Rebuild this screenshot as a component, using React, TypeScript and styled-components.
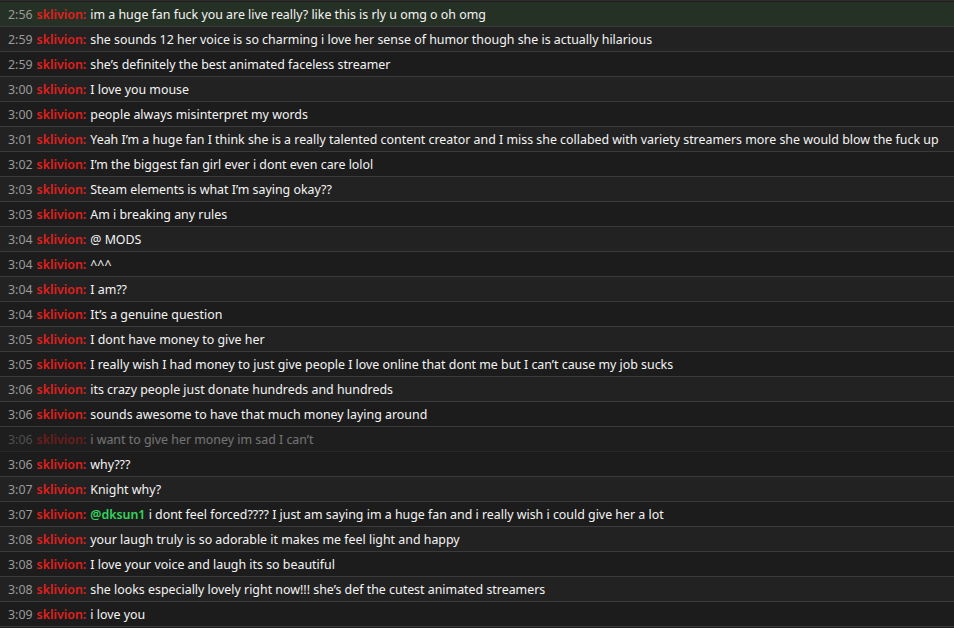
import React from "react";
import styled, { createGlobalStyle } from "styled-components";

const GlobalStyle = createGlobalStyle`
  html, body {
    margin: 0;
    padding: 0;
    background: #1c1c1c;
  }
  body {
    font-family: "Noto Sans", "Open Sans", sans-serif;
  }
`;

interface Line {
  time: string;
  text: string;
  mention?: string;
  faded?: boolean;
  highlight?: boolean;
}

const lines: Line[] = [
  { time: "2:56", text: "im a huge fan fuck you are live really? like this is rly u omg o oh omg", highlight: true },
  { time: "2:59", text: "she sounds 12 her voice is so charming i love her sense of humor though she is actually hilarious" },
  { time: "2:59", text: "she\u2019s definitely the best animated faceless streamer" },
  { time: "3:00", text: "I love you mouse" },
  { time: "3:00", text: "people always misinterpret my words" },
  { time: "3:01", text: "Yeah I\u2019m a huge fan I think she is a really talented content creator and I miss she collabed with variety streamers more she would blow the fuck up" },
  { time: "3:02", text: "I\u2019m the biggest fan girl ever i dont even care lolol" },
  { time: "3:03", text: "Steam elements is what I\u2019m saying okay??" },
  { time: "3:03", text: "Am i breaking any rules" },
  { time: "3:04", text: "@ MODS" },
  { time: "3:04", text: "^^^" },
  { time: "3:04", text: "I am??" },
  { time: "3:04", text: "It\u2019s a genuine question" },
  { time: "3:05", text: "I dont have money to give her" },
  { time: "3:05", text: "I really wish I had money to just give people I love online that dont me but I can\u2019t cause my job sucks" },
  { time: "3:06", text: "its crazy people just donate hundreds and hundreds" },
  { time: "3:06", text: "sounds awesome to have that much money laying around" },
  { time: "3:06", text: "i want to give her money im sad I can\u2019t", faded: true },
  { time: "3:06", text: "why???" },
  { time: "3:07", text: "Knight why?" },
  { time: "3:07", mention: "@dksun1", text: " i dont feel forced???? I just am saying im a huge fan and i really wish i could give her a lot" },
  { time: "3:08", text: "your laugh truly is so adorable it makes me feel light and happy" },
  { time: "3:08", text: "I love your voice and laugh its so beautiful" },
  { time: "3:08", text: "she looks especially lovely right now!!! she\u2019s def the cutest animated streamers" },
  { time: "3:09", text: "i love you" },
];

const Log = styled.div`
  display: flex;
  flex-direction: column;
  padding-top: 1px;
  background: #1c1c1c;
  border-top: 1px solid #2e2e2e;
`;

const Row = styled.div<{ $alt: boolean; $highlight?: boolean; $faded?: boolean }>`
  display: flex;
  align-items: center;
  height: 24px;
  padding: 0 8px;
  border-bottom: 1px solid #3a3a3a;
  background: ${p => (p.$highlight ? "#263125" : p.$alt ? "#222222" : "#1c1c1c")};
  font-size: 12.4px;
  white-space: nowrap;
  overflow: hidden;
  opacity: ${p => (p.$faded ? 0.4 : 1)};
`;

const Time = styled.span`
  color: #9a9a9a;
  margin-right: 4px;
`;

const Name = styled.span`
  color: #e0201e;
  font-weight: 600;
  margin-right: 4px;
`;

const Message = styled.span`
  color: #f4f4f4;
`;

const Mention = styled.span`
  color: #33d45f;
  font-weight: 600;
`;

const App: React.FC = () => (
  <>
    <GlobalStyle />
    <Log>
      {lines.map((l, i) => (
        <Row key={i} $alt={i % 2 === 1} $highlight={l.highlight} $faded={l.faded}>
          <Time>{l.time}</Time>
          <Name>sklivion:</Name>
          <Message>
            {l.mention && <Mention>{l.mention}</Mention>}
            {l.text}
          </Message>
        </Row>
      ))}
    </Log>
  </>
);

export default App;
